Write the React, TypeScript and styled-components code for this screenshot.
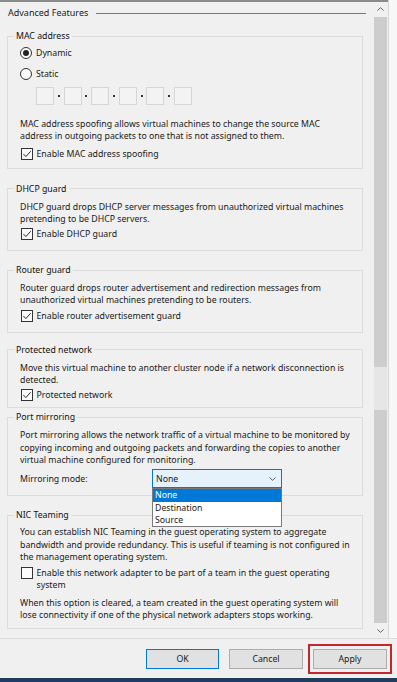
import React from 'react';
import styled, { createGlobalStyle } from 'styled-components';

const Global = createGlobalStyle`
  html, body { margin: 0; padding: 0; background: #f0f0f0; }
  body {
    font-family: "Noto Sans", "Open Sans", sans-serif;
    font-size: 8.75px;
    color: #1a1a1a;
  }
  #root { width: 397px; height: 682px; }
`;

const Window = styled.div`
  width: 397px;
  height: 682px;
  display: flex;
  flex-direction: column;
  background: #f0f0f0;
  overflow: hidden;
`;

const Main = styled.div`
  display: flex;
  height: 638px;
`;

const Pane = styled.div`
  width: 388px;
  display: flex;
  border-top: 2px solid #8a8a8a;
  box-sizing: border-box;
`;

const RightStrip = styled.div`
  flex: 1;
  background: #f7f7f7;
  border-left: 1px solid #d6d6d6;
`;

const Content = styled.div`
  width: 373px;
  box-sizing: border-box;
  padding: 5px 10px 0 7px;
  display: flex;
  flex-direction: column;
  overflow: hidden;
`;

const Header = styled.div`
  display: flex;
  align-items: center;
  height: 12px;
  margin-right: -3px;
  padding-left: 1px;
`;

const HeaderTitle = styled.span`
  font-size: 9px;
  line-height: 12px;
  white-space: nowrap;
`;

const HeaderRule = styled.div`
  flex: 1;
  margin-left: 8px;
  border-top: 1px solid #787878;
`;

const Group = styled.fieldset<{ $mt: number; $pt: number; $pb: number }>`
  margin: ${(p) => p.$mt}px 0 0;
  padding: ${(p) => p.$pt}px 8px ${(p) => p.$pb}px 12px;
  border: 1px solid #dcdcdc;
  min-width: 0;
  box-sizing: border-box;
`;

const Legend = styled.legend`
  margin-left: -6px;
  padding: 0 2px;
  line-height: 12px;
  font-size: 8.75px;
  color: #111;
`;

const Desc = styled.p<{ $mt?: number }>`
  margin: ${(p) => p.$mt ?? 0}px 0 0;
  line-height: 12.3px;
  white-space: nowrap;
`;

const OptionRow = styled.label<{ $mt?: number; $h?: number }>`
  display: flex;
  align-items: center;
  height: ${(p) => p.$h ?? 14}px;
  margin-top: ${(p) => p.$mt ?? 0}px;
  gap: 4px;
  white-space: nowrap;
`;

const MultiRow = styled.label<{ $mt?: number }>`
  display: flex;
  align-items: flex-start;
  margin-top: ${(p) => p.$mt ?? 0}px;
  gap: 4px;
  line-height: 12px;
  white-space: nowrap;
`;

const CheckBox = styled.span`
  flex: none;
  width: 12px;
  height: 12px;
  margin-left: 0.5px;
  border: 1px solid #333;
  box-sizing: border-box;
  display: flex;
  align-items: center;
  justify-content: center;
  background: #fbfbfb;
`;

const MultiCheck = styled(CheckBox)`
  margin-top: 0px;
`;

const Radio = styled.span`
  flex: none;
  width: 12px;
  height: 12px;
  border: 1px solid #333;
  border-radius: 50%;
  box-sizing: border-box;
  display: flex;
  align-items: center;
  justify-content: center;
  background: #fbfbfb;
`;

const RadioDot = styled.span`
  width: 6px;
  height: 6px;
  border-radius: 50%;
  background: #222;
`;

const MacRow = styled.div`
  display: flex;
  align-items: center;
  margin: 5px 0 0 16px;
  height: 18px;
`;

const MacBox = styled.span`
  width: 18px;
  height: 18px;
  box-sizing: border-box;
  border: 1px solid #d6d6d6;
  background: #f3f3f3;
`;

const MacSep = styled.span`
  width: 9.6px;
  display: flex;
  justify-content: center;
  align-items: center;
  &::after {
    content: '';
    width: 2px;
    height: 1.5px;
    background: #333;
  }
`;

const SelectRow = styled.div`
  display: flex;
  align-items: center;
  height: 19px;
  margin-top: 3px;
`;

const SelectLabel = styled.span`
  width: 132px;
`;

const SelectWrap = styled.div`
  position: relative;
  width: 130px;
  height: 19px;
`;

const SelectBox = styled.div`
  width: 100%;
  height: 100%;
  box-sizing: border-box;
  border: 1px solid #0078d7;
  background: #e5f1fb;
  display: flex;
  align-items: center;
  justify-content: space-between;
  padding: 0 5px 0 3px;
`;

const DropList = styled.ul`
  position: absolute;
  top: 100%;
  left: 0;
  width: 100%;
  margin: 0;
  padding: 0;
  list-style: none;
  box-sizing: border-box;
  border: 1px solid #7a7a7a;
  background: #fff;
  z-index: 2;
`;

const DropItem = styled.li<{ $active?: boolean }>`
  line-height: 12.3px;
  padding-left: 2px;
  background: ${(p) => (p.$active ? '#0078d7' : 'transparent')};
  color: ${(p) => (p.$active ? '#fff' : '#1a1a1a')};
`;

const Scrollbar = styled.div`
  width: 15px;
  display: flex;
  flex-direction: column;
  background: #f0f0f0;
`;

const ScrollArrow = styled.div<{ $h: number }>`
  height: ${(p) => p.$h}px;
  display: flex;
  align-items: center;
  justify-content: center;
`;

const Thumb = styled.div<{ $h?: number }>`
  margin: 0 1px;
  background: #cdcdcd;
  ${(p) => (p.$h ? `height: ${p.$h}px; margin-top: 1px;` : 'flex: 1;')}
`;

const TrackGap = styled.div`
  height: 43px;
  margin: 0 1px;
  background: #e6e6e6;
`;

const ButtonBar = styled.div`
  height: 40px;
  box-sizing: border-box;
  border-top: 1px solid #dcdcdc;
  display: flex;
  align-items: center;
  justify-content: flex-end;
  gap: 10px;
  padding-right: 10px;
`;

const Button = styled.button<{ $primary?: boolean; $marked?: boolean; $w?: number }>`
  width: ${(p) => p.$w ?? 74}px;
  height: 20px;
  box-sizing: border-box;
  font-family: inherit;
  font-size: 8.75px;
  color: #1a1a1a;
  background: #e1e1e1;
  border: 1px solid ${(p) => (p.$primary ? '#0078d7' : '#adadad')};
  padding: 0;
  outline: ${(p) => (p.$marked ? '2px solid #c4262e' : 'none')};
  outline-offset: 3px;
`;

const BottomStrip = styled.div`
  height: 4px;
  background: #1f3d5c;
`;

const Check = () => (
  <svg width="10" height="10" viewBox="0 0 10 10">
    <path d="M1.4 5 L3.9 7.6 L8.7 2.2" fill="none" stroke="#2a2a2a" strokeWidth="1" />
  </svg>
);

const Chevron = ({ up }: { up?: boolean }) => (
  <svg width="7" height="4" viewBox="0 0 7 4">
    <path d={up ? 'M0.5 3.5 L3.5 0.7 L6.5 3.5' : 'M0.5 0.5 L3.5 3.3 L6.5 0.5'} fill="none" stroke="#606060" strokeWidth="1" />
  </svg>
);

export default function App() {
  return (
    <>
      <Global />
      <Window>
        <Main>
          <Pane>
            <Content>
              <Header>
                <HeaderTitle>Advanced Features</HeaderTitle>
                <HeaderRule />
              </Header>

              <Group $mt={11} $pt={3} $pb={7}>
                <Legend>MAC address</Legend>
                <OptionRow $h={16}>
                  <Radio>
                    <RadioDot />
                  </Radio>
                  Dynamic
                </OptionRow>
                <OptionRow $h={16} $mt={5}>
                  <Radio />
                  Static
                </OptionRow>
                <MacRow>
                  <MacBox />
                  <MacSep />
                  <MacBox />
                  <MacSep />
                  <MacBox />
                  <MacSep />
                  <MacBox />
                  <MacSep />
                  <MacBox />
                  <MacSep />
                  <MacBox />
                </MacRow>
                <Desc $mt={13}>
                  MAC address spoofing allows virtual machines to change the source MAC
                  <br />
                  address in outgoing packets to one that is not assigned to them.
                </Desc>
                <OptionRow $mt={4}>
                  <CheckBox>
                    <Check />
                  </CheckBox>
                  Enable MAC address spoofing
                </OptionRow>
              </Group>

              <Group $mt={14} $pt={6} $pb={9}>
                <Legend>DHCP guard</Legend>
                <Desc>
                  DHCP guard drops DHCP server messages from unauthorized virtual machines
                  <br />
                  pretending to be DHCP servers.
                </Desc>
                <OptionRow $mt={2}>
                  <CheckBox>
                    <Check />
                  </CheckBox>
                  Enable DHCP guard
                </OptionRow>
              </Group>

              <Group $mt={13} $pt={6} $pb={9}>
                <Legend>Router guard</Legend>
                <Desc>
                  Router guard drops router advertisement and redirection messages from
                  <br />
                  unauthorized virtual machines pretending to be routers.
                </Desc>
                <OptionRow $mt={2}>
                  <CheckBox>
                    <Check />
                  </CheckBox>
                  Enable router advertisement guard
                </OptionRow>
              </Group>

              <Group $mt={11} $pt={6} $pb={5}>
                <Legend>Protected network</Legend>
                <Desc>
                  Move this virtual machine to another cluster node if a network disconnection is
                  <br />
                  detected.
                </Desc>
                <OptionRow $mt={2}>
                  <CheckBox>
                    <Check />
                  </CheckBox>
                  Protected network
                </OptionRow>
              </Group>

              <Group $mt={3} $pt={6} $pb={7}>
                <Legend>Port mirroring</Legend>
                <Desc>
                  Port mirroring allows the network traffic of a virtual machine to be monitored by
                  <br />
                  copying incoming and outgoing packets and forwarding the copies to another
                  <br />
                  virtual machine configured for monitoring.
                </Desc>
                <SelectRow>
                  <SelectLabel>Mirroring mode:</SelectLabel>
                  <SelectWrap>
                    <SelectBox>
                      <span>None</span>
                      <Chevron />
                    </SelectBox>
                    <DropList>
                      <DropItem $active>None</DropItem>
                      <DropItem>Destination</DropItem>
                      <DropItem>Source</DropItem>
                    </DropList>
                  </SelectWrap>
                </SelectRow>
              </Group>

              <Group $mt={13} $pt={5} $pb={6}>
                <Legend>NIC Teaming</Legend>
                <Desc>
                  You can establish NIC Teaming in the guest operating system to aggregate
                  <br />
                  bandwidth and provide redundancy. This is useful if teaming is not configured in
                  <br />
                  the management operating system.
                </Desc>
                <MultiRow $mt={4}>
                  <MultiCheck />
                  <span>
                    Enable this network adapter to be part of a team in the guest operating
                    <br />
                    system
                  </span>
                </MultiRow>
                <Desc $mt={6}>
                  When this option is cleared, a team created in the guest operating system will
                  <br />
                  lose connectivity if one of the physical network adapters stops working.
                </Desc>
              </Group>
            </Content>

            <Scrollbar>
              <ScrollArrow $h={14}>
                <Chevron up />
              </ScrollArrow>
              <Thumb $h={350} />
              <TrackGap />
              <Thumb />
              <ScrollArrow $h={15}>
                <Chevron />
              </ScrollArrow>
            </Scrollbar>
          </Pane>
          <RightStrip />
        </Main>

        <ButtonBar>
          <Button $primary $w={73}>OK</Button>
          <Button>Cancel</Button>
          <Button $marked>Apply</Button>
        </ButtonBar>
        <BottomStrip />
      </Window>
    </>
  );
}
